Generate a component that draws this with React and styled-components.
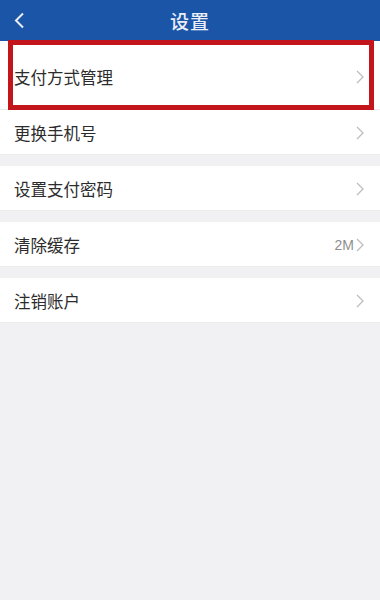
import styled, { createGlobalStyle } from "styled-components";

const GlobalStyle = createGlobalStyle`
  html, body {
    margin: 0;
    padding: 0;
    background: #f1f1f3;
  }
  body {
    font-family: "Noto Sans CJK SC", "Noto Sans", sans-serif;
  }
`;

const Page = styled.div`
  width: 380px;
  min-height: 600px;
  background: #f1f1f3;
`;

const Header = styled.div`
  height: 41px;
  background: #1b55a7;
  display: grid;
  grid-template-columns: 48px 1fr 48px;
  align-items: center;
`;

const BackBtn = styled.button`
  border: none;
  background: none;
  padding: 0 0 0 14px;
  height: 41px;
  display: flex;
  align-items: center;
`;

const Title = styled.h1`
  margin: 0;
  text-align: center;
  color: #e9eef7;
  font-size: 19px;
  font-weight: 500;
  letter-spacing: 1px;
`;

const List = styled.div`
  display: flex;
  flex-direction: column;
  gap: 11px;
`;

const Row = styled.div`
  position: relative;
  height: ${({ tall }) => (tall ? "69px" : "45px")};
  padding: ${({ tall }) => (tall ? "3px 16px 0 14px" : "1px 16px 0 14px")};
  box-sizing: border-box;
  background: #fff;
  display: flex;
  align-items: center;
  border-bottom: 1px solid #ebebed;
`;

const Label = styled.span`
  flex: 1;
  font-size: 16.5px;
  color: #2c2c2c;
`;

const Extra = styled.span`
  font-size: 14px;
  color: #8f8f8f;
  margin-right: 2px;
  font-family: "Liberation Sans", Arial, sans-serif;
`;

const Highlight = styled.div`
  position: absolute;
  top: -1px;
  left: 8px;
  right: 6px;
  bottom: -1px;
  border: 5px solid #c3161c;
  pointer-events: none;
`;

const Chevron = () => (
  <svg width="8" height="14" viewBox="0 0 8 14">
    <path d="M1 1 L7 7 L1 13" fill="none" stroke="#bdbdbd" strokeWidth="1.3" />
  </svg>
);

const items = [
  { label: "更换手机号" },
  { label: "设置支付密码" },
  { label: "清除缓存", extra: "2M" },
  { label: "注销账户" },
];

export default function App() {
  return (
    <Page>
      <GlobalStyle />
      <Header>
        <BackBtn>
          <svg width="11" height="17" viewBox="0 0 11 17">
            <path d="M9 1.5 L2 8.5 L9 15.5" fill="none" stroke="#e9eef7" strokeWidth="2" />
          </svg>
        </BackBtn>
        <Title>设置</Title>
        <span />
      </Header>
      <Row tall>
        <Label>支付方式管理</Label>
        <Chevron />
        <Highlight />
      </Row>
      <List>
        {items.map((it) => (
          <Row key={it.label}>
            <Label>{it.label}</Label>
            {it.extra && <Extra>{it.extra}</Extra>}
            <Chevron />
          </Row>
        ))}
      </List>
    </Page>
  );
}
